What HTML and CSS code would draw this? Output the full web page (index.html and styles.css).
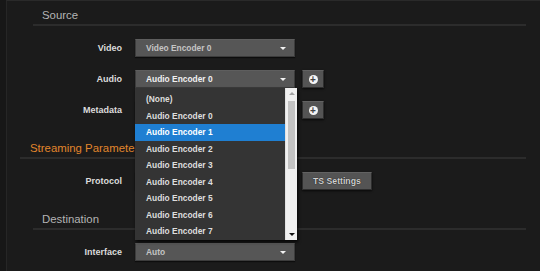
FILE: index.html
```html
<!DOCTYPE html>
<html lang="en">
<head>
    <meta charset="UTF-8">
    <meta name="viewport" content="width=device-width, initial-scale=1.0">
    <title>Stream Settings</title>
    <link rel="stylesheet" href="styles.css">
</head>
<body>
    <div class="page">
        <div class="section sub">
            <h3 class="title">Source</h3>
            <div class="rows">
                <div class="row">
                    <label>Video</label>
                    <div class="select">Video Encoder 0<span class="caret"></span></div>
                </div>
                <div class="row">
                    <label>Audio</label>
                    <div class="select open">Audio Encoder 0<span class="caret"></span>
                        <!-- dropdown list -->
                        <div class="dropdown">
                            <ul class="options">
                                <li>(None)</li>
                                <li>Audio Encoder 0</li>
                                <li class="active">Audio Encoder 1</li>
                                <li>Audio Encoder 2</li>
                                <li>Audio Encoder 3</li>
                                <li>Audio Encoder 4</li>
                                <li>Audio Encoder 5</li>
                                <li>Audio Encoder 6</li>
                                <li>Audio Encoder 7</li>
                            </ul>
                            <div class="scrollbar">
                                <span class="arrow up"></span>
                                <div class="track"><div class="thumb"></div></div>
                                <span class="arrow down"></span>
                            </div>
                        </div>
                    </div>
                    <button class="btn icon"><span class="plus">+</span></button>
                </div>
                <div class="row">
                    <label>Metadata</label>
                    <div class="select"><span class="caret"></span></div>
                    <button class="btn icon"><span class="plus">+</span></button>
                </div>
            </div>
        </div>

        <div class="section">
            <h3 class="title orange">Streaming Parameters</h3>
            <div class="rows">
                <div class="row">
                    <label>Protocol</label>
                    <div class="select"><span class="caret"></span></div>
                    <button class="btn">TS Settings</button>
                </div>
            </div>
        </div>

        <div class="section sub">
            <h3 class="title">Destination</h3>
            <div class="rows">
                <div class="row">
                    <label>Interface</label>
                    <div class="select">Auto<span class="caret"></span></div>
                </div>
            </div>
        </div>
    </div>
</body>
</html>
```

FILE: styles.css
```css
body {
    margin: 0;
    padding: 0;
    background: #171717;
    font-family: "Liberation Sans", Arial, sans-serif;
}

.page {
    margin-left: 6px;
    height: 268px;
    border-left: 1px solid #262626;
    border-top: 1px solid #2a2a2a;
    border-bottom: 1px solid #2a2a2a;
    background: #1b1b1b;
    padding-top: 7px;
    overflow: hidden;
}

.section {
    margin-bottom: 22px;
}

.title {
    margin: 0 14px 13px 13px;
    padding: 0 0 2px 10px;
    font-size: 11.4px;
    font-weight: normal;
    line-height: 14px;
    color: #b4b4b4;
    border-bottom: 2px solid #2c2c2c;
}
.sub .title {
    margin-left: 26px;
    padding-left: 9px;
}
.orange {
    color: #e2862c;
}

.rows {
    display: flex;
    flex-direction: column;
    gap: 13px;
}

.row {
    display: grid;
    grid-template-columns: 115px 160px auto;
    column-gap: 13px;
    align-items: center;
    height: 18px;
}
.row label {
    text-align: right;
    font-size: 9px;
    font-weight: bold;
    color: #dcdcdc;
}
.row .btn {
    margin-left: -6px;
    justify-self: start;
}

/* select box */
.select {
    position: relative;
    box-sizing: border-box;
    height: 18px;
    line-height: 17px;
    padding-left: 10px;
    background: #565656;
    border: 1px solid #3c3c3c;
    border-top-color: #5e5e5e;
    box-shadow: 0 1px 1px rgba(0, 0, 0, 0.5);
    font-size: 8.4px;
    font-weight: bold;
    color: #c4c4c4;
}
.select.open {
    color: #f0f0f0;
}
.caret {
    position: absolute;
    right: 8px;
    top: 7px;
    border-left: 3px solid transparent;
    border-right: 3px solid transparent;
    border-top: 3px solid #f2f2f2;
}

/* open list */
.dropdown {
    position: absolute;
    left: -1px;
    top: 17px;
    width: 162px;
    height: 152px;
    display: flex;
    background: #343434;
    box-shadow: 1px 2px 3px rgba(0, 0, 0, 0.8);
    z-index: 5;
}
.options {
    list-style: none;
    margin: 0;
    padding: 3px 0 0;
    flex: 1;
}
.options li {
    height: 16.5px;
    line-height: 16.5px;
    padding-left: 11px;
    color: #dedede;
}
.options li.active {
    background: #1f7fd2;
    color: #fff;
}

.scrollbar {
    width: 11px;
    display: flex;
    flex-direction: column;
    align-items: center;
    background: #f0f0f0;
    border-left: 1px solid #e2e2e2;
}
.track {
    flex: 1;
    width: 100%;
    padding-top: 2px;
}
.thumb {
    margin: 0 auto;
    width: 7px;
    height: 68px;
    background: #c2c2c2;
}
.arrow {
    display: block;
    margin: 4px 0;
    border-left: 3px solid transparent;
    border-right: 3px solid transparent;
}
.arrow.up {
    border-bottom: 3px solid #a3a3a3;
}
.arrow.down {
    border-top: 3px solid #111;
}

/* buttons */
.btn {
    box-sizing: border-box;
    height: 18px;
    padding: 0 10px;
    background: #545454;
    border: 1px solid #2e2e2e;
    border-top-color: #626262;
    box-shadow: 0 1px 2px rgba(0, 0, 0, 0.7);
    font-family: "Liberation Sans", Arial, sans-serif;
    font-size: 8.7px;
    font-weight: bold;
    color: #d0d0d0;
    text-shadow: 0 0 1px #000;
}
.btn.icon {
    width: 22px;
    padding: 0;
    display: flex;
    align-items: center;
    justify-content: center;
}
.plus {
    display: block;
    width: 9px;
    height: 9px;
    border-radius: 50%;
    background: #f4f4f4;
    color: #444;
    font-size: 10px;
    font-weight: bold;
    line-height: 9px;
    text-align: center;
    text-shadow: none;
}
```
